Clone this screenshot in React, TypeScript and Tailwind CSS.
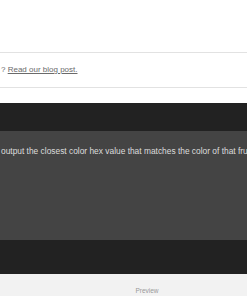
export default function App() {
  return (
    <div className="w-[247px] h-[296px] overflow-hidden bg-white flex flex-col" style={{ fontFamily: '"Liberation Sans", Arial, sans-serif' }}>
      <div className="h-[52px] shrink-0" />
      <div className="h-px bg-[#e2e2e2] shrink-0" />
      <div className="h-[34px] shrink-0 flex items-center pl-[1px] text-[8px] text-[#6a6a6a] whitespace-nowrap">
        <p>? <a className="underline">Read our blog post.</a></p>
      </div>
      <div className="h-px bg-[#e2e2e2] shrink-0" />
      <div className="h-[15px] shrink-0" />
      <div className="h-[28px] shrink-0 bg-[#222]" />
      <div className="h-[109px] shrink-0 bg-[#444] pt-[14px] pl-[1px] text-[8.4px] text-[#ddd] whitespace-nowrap overflow-hidden">
        output the closest color hex value that matches the color of that fruit.
      </div>
      <div className="h-[34px] shrink-0 bg-[#222]" />
      <div className="flex-1 bg-[#f2f2f2] flex justify-center pt-[12px] pl-[47px] text-[6.5px] text-[#999]">
        Preview
      </div>
    </div>
  );
}
